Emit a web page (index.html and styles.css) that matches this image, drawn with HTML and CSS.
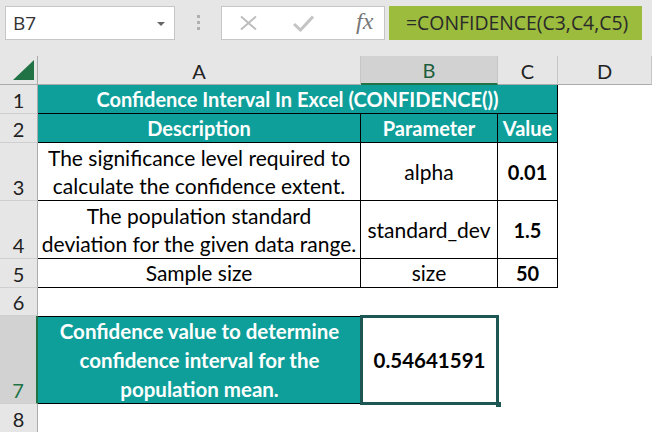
FILE: index.html
```html
<!DOCTYPE html>
<html lang="en">
<head>
  <meta charset="UTF-8" />
  <title>Confidence Interval In Excel</title>
  <link rel="stylesheet" href="styles.css">
</head>
<body>
  <div class="toolbar">
    <div class="namebox">
      <span>B7</span>
      <span class="caret"></span>
    </div>
    <div class="grip"><i></i><i></i><i></i></div>
    <div class="fxbox">
      <svg class="ico" width="18" height="14" viewBox="0 0 18 14">
        <path d="M1 0.5 L16 13.5 M16 0.5 L1 13.5" stroke="#bdbdbd" stroke-width="2" fill="none"/>
      </svg>
      <svg class="ico" width="21" height="17" viewBox="0 0 21 17">
        <path d="M1 9 L7.5 15 L20 1.5" stroke="#c4c4c4" stroke-width="3" fill="none"/>
      </svg>
      <span class="fx">fx</span>
    </div>
    <div class="formula">=CONFIDENCE(C3,C4,C5)</div>
  </div>

  <div class="sheet">
    <div class="corner"><span class="tri"></span></div>
    <div class="colhead">A</div>
    <div class="colhead active">B</div>
    <div class="colhead">C</div>
    <div class="colhead">D</div>

    <div class="rowhead">1</div>
    <div class="cell title span3">Confidence Interval In Excel (CONFIDENCE())</div>
    <div class="blank"></div>

    <div class="rowhead">2</div>
    <div class="cell head">Description</div>
    <div class="cell head">Parameter</div>
    <div class="cell head">Value</div>
    <div class="blank"></div>

    <div class="rowhead">3</div>
    <div class="cell">The significance level required to<br>calculate the confidence extent.</div>
    <div class="cell">alpha</div>
    <div class="cell num">0.01</div>
    <div class="blank"></div>

    <div class="rowhead">4</div>
    <div class="cell">The population standard<br>deviation for the given data range.</div>
    <div class="cell">standard_dev</div>
    <div class="cell num">1.5</div>
    <div class="blank"></div>

    <div class="rowhead">5</div>
    <div class="cell">Sample size</div>
    <div class="cell">size</div>
    <div class="cell num">50</div>
    <div class="blank"></div>

    <div class="rowhead">6</div>
    <div class="blank span4"></div>

    <div class="rowhead active">7</div>
    <div class="result-label">Confidence value to determine<br>confidence interval for the<br>population mean.</div>
    <div class="result">0.54641591</div>
    <div class="blank span2"></div>

    <div class="rowhead">8</div>
    <div class="blank span4"></div>
  </div>
</body>
</html>
```

FILE: styles.css
```css
* {
  box-sizing: border-box;
}

body {
  margin: 0;
  width: 652px;
  height: 432px;
  overflow: hidden;
  background: #fff;
  font-family: Lato, "Open Sans", sans-serif;
}

/* formula bar */
.toolbar {
  height: 56px;
  background: #e6e6e6;
  display: flex;
  align-items: flex-start;
  padding: 6px 0 0 5px;
  font-family: "Open Sans", sans-serif;
  color: #333;
}

.namebox {
  width: 170px;
  height: 34px;
  background: #fff;
  border: 1px solid #c6c6c6;
  display: flex;
  align-items: center;
  justify-content: space-between;
  padding: 0 9px 0 7px;
  font-size: 19px;
}

.caret {
  width: 0;
  height: 0;
  border-left: 4px solid transparent;
  border-right: 4px solid transparent;
  border-top: 4px solid #666;
  margin-top: 2px;
}

.grip {
  width: 46px;
  display: flex;
  flex-direction: column;
  align-items: center;
  gap: 3px;
  padding-top: 9px;
}

.grip i {
  width: 3px;
  height: 3px;
  background: #b0b0b0;
}

.fxbox {
  width: 164px;
  height: 34px;
  background: #fff;
  border: 1px solid #c6c6c6;
  display: flex;
  align-items: center;
  padding-left: 18px;
}

.fxbox .ico {
  margin-right: 35px;
}

.fxbox .ico + .ico {
  margin-right: 42px;
}

.fx {
  font-family: "Liberation Serif", serif;
  font-style: italic;
  font-size: 24px;
  color: #777;
  margin-top: -3px;
}

.formula {
  margin-left: 4px;
  width: 253px;
  height: 34px;
  background: #9bbc3d;
  padding-left: 17px;
  line-height: 34px;
  font-size: 19.4px;
  color: #2a2a2a;
}

/* grid */
.sheet {
  display: grid;
  grid-template-columns: 38px 323px 137px 60px 1fr;
  grid-template-rows: 29px 29px 29px 58px 58px 29px 28px 88px 29px;
  font-size: 21px;
  color: #000;
}

.corner {
  background: #e6e6e6;
  border-right: 1px solid #ababab;
  border-bottom: 1px solid #ababab;
  position: relative;
}

.tri {
  position: absolute;
  left: 13px;
  top: 4px;
  width: 0;
  height: 0;
  border-left: 21px solid transparent;
  border-bottom: 20px solid #217346;
}

.colhead {
  background: #e6e6e6;
  border-right: 1px solid #c6c6c6;
  border-bottom: 1px solid #ababab;
  display: flex;
  align-items: center;
  justify-content: center;
  color: #222;
  padding-top: 1px;
  font-size: 20px;
}

.colhead.active {
  background: #d2d2d2;
  border-bottom: 2px solid #217346;
  color: #1d5f3c;
}

.rowhead {
  background: #e6e6e6;
  border-right: 1px solid #ababab;
  border-bottom: 1px solid #cfcfcf;
  display: flex;
  align-items: flex-end;
  justify-content: center;
  padding-bottom: 1px;
  color: #222;
  font-size: 20px;
}

.rowhead.active {
  background: #d2d2d2;
  border-right: 2px solid #217346;
  color: #217346;
}

.cell {
  border-right: 1px solid #000;
  border-bottom: 1px solid #000;
  display: flex;
  align-items: center;
  justify-content: center;
  text-align: center;
  line-height: 28px;
}

.span2 { grid-column: span 2; }
.span3 { grid-column: span 3; }
.span4 { grid-column: span 4; }

.title,
.head {
  background: #0f9f9a;
  color: #fff;
  font-weight: bold;
  font-size: 20px;
}

.num {
  font-weight: bold;
  font-size: 20px;
}

.result-label {
  background: #0f9f9a;
  color: #fff;
  font-weight: bold;
  font-size: 20.5px;
  border-top: 1px solid #000;
  border-bottom: 1px solid #000;
  text-align: center;
  line-height: 29px;
}

.result {
  position: relative;
  display: flex;
  align-items: center;
  justify-content: center;
  font-weight: bold;
  font-size: 20.5px;
  box-shadow: inset 0 0 0 2px #1d5753, 0 0 0 1px #1d5753;
}

.result::after {
  content: "";
  position: absolute;
  right: -3px;
  bottom: -3px;
  width: 5px;
  height: 5px;
  background: #1d5753;
}
```
